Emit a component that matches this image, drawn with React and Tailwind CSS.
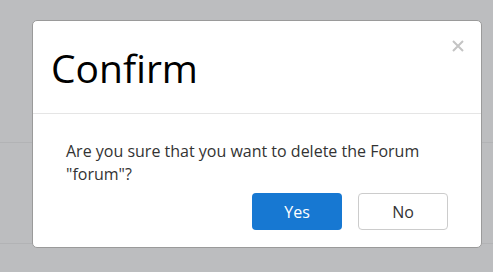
export default function App() {
  return (
    <div
      className="relative w-[493px] h-[272px] overflow-hidden bg-[#bcbdbf]"
      style={{ fontFamily: '"Open Sans", sans-serif' }}
    >
      {/* page behind overlay */}
      <div className="pt-[142px]">
        <div className="h-px bg-[#b2b3b5]" />
        <div className="h-[100px]" />
        <div className="h-px bg-[#b2b3b5]" />
      </div>

      {/* modal */}
      <div className="absolute left-[32px] top-[20px] w-[450px] h-[228px] bg-white border border-[#9a9a9a] rounded-[5px] flex flex-col">
        <div className="relative h-[93px] border-b border-[#e5e5e5] pl-[18px] flex items-center">
          <h1 className="text-[39px] leading-none text-black pt-[1px]">Confirm</h1>
          <button className="absolute right-[16px] top-[18px] w-[14px] h-[14px] flex items-center justify-center">
            <svg width="12" height="12" viewBox="0 0 12 12">
              <path d="M1 1L11 11M11 1L1 11" stroke="#c4c4c4" strokeWidth="2" />
            </svg>
          </button>
        </div>
        <div className="px-[33px] pt-[26px] text-[16px] leading-[23px] text-[#333]">
          Are you sure that you want to delete the Forum "forum"?
        </div>
        <div className="flex justify-end gap-[16px] pr-[33px] pt-[7px]">
          <button className="w-[90px] h-[37px] rounded-[4px] bg-[#1778d2] text-white text-[16px]">
            Yes
          </button>
          <button className="w-[90px] h-[37px] rounded-[4px] bg-white border border-[#cccccc] text-[#333] text-[16px]">
            No
          </button>
        </div>
      </div>
    </div>
  );
}
